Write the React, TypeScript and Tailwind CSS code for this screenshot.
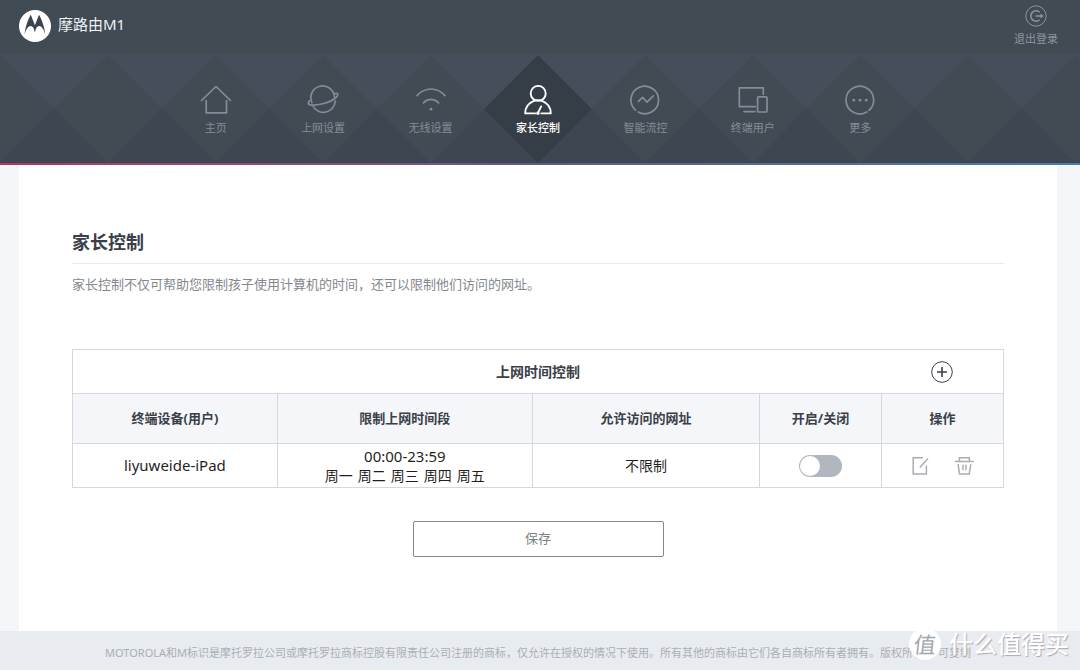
import { useState, type ReactNode } from 'react';

interface NavItem {
  label: string;
  icon: ReactNode;
}

const navItems: NavItem[] = [
  {
    label: '主页',
    icon: <path d="M1.5 16.5L16 2.5l14.5 14M6.200 16.500v12.300h20.300V16.500" />,
  },
  {
    label: '上网设置',
    icon: (
      <>
        <path d="M4.9 18.6A11.8 11.8 0 1 1 27.4 13" />
        <path d="M6.3 22.6A11.8 11.8 0 0 0 28.2 17.2" />
        <path d="M2.6 16.6C.2 19.5 1.6 21.2 5 21.2c6 0 17.5-2.2 23.4-7.2 3.2-2.8 3.4-5.4-.4-4.4" />
      </>
    ),
  },
  {
    label: '无线设置',
    icon: (
      <>
        <path d="M2 11.6C10 2.8 22 2.8 30 11.6M8.4 18.8c4.6-4.6 10.6-4.6 15.2 0" />
        <circle cx="16" cy="25.2" r="1.400" fill="currentColor" stroke="none" />
      </>
    ),
  },
  {
    label: '家长控制',
    icon: (
      <>
        <circle cx="16.200" cy="9.4" r="7.500" />
        <path d="M13.2 29.4H3.2C3.2 23.6 6.6 19.2 11.4 17.2a11 11 0 0 1 9.2 0c4.8 2 8.200 6.400 8.200 12.200H19.4M19.200 22.400l-3 6" />
        <circle cx="15.9" cy="29.2" r="1.700" fill="currentColor" stroke="none" />
      </>
    ),
  },
  {
    label: '智能流控',
    icon: (
      <>
        <path d="M6.400 26.100A13.800 13.800 0 1 1 9.200 28.100" />
        <path d="M9.400 17.400l4.200-4 4.400 4.800 6.400-6.400" />
      </>
    ),
  },
  {
    label: '终端用户',
    icon: (
      <>
        <path d="M18.400 22.600H2.300V3.800h24v6.400M7 27.600h11" />
        <rect x="20.600" y="12.800" width="9.400" height="15.200" rx="1" />
      </>
    ),
  },
  {
    label: '更多',
    icon: (
      <>
        <path d="M25 26.400A13.800 13.800 0 1 0 22.800 28" />
        <g fill="currentColor" stroke="none">
          <circle cx="9.800" cy="16.200" r="1.400" />
          <circle cx="16" cy="16.200" r="1.400" />
          <circle cx="22.200" cy="16.200" r="1.400" />
        </g>
      </>
    ),
  },
];

const columns = [
  { title: '终端设备(用户)', width: 'w-[22%]' },
  { title: '限制上网时间段', width: 'w-[27.4%]' },
  { title: '允许访问的网址', width: 'w-[24.4%]' },
  { title: '开启/关闭', width: 'w-[13.1%]' },
  { title: '操作', width: 'w-[13.1%]' },
];

const rules = [
  {
    device: 'liyuweide-iPad',
    time: '00:00-23:59',
    days: ['周一', '周二', '周三', '周四', '周五'],
    sites: '不限制',
  },
];

export default function App() {
  const [active, setActive] = useState('家长控制');

  return (
    <div className="relative flex min-h-screen flex-col overflow-hidden bg-[#f5f6fa] font-['Noto_Sans','Noto_Sans_CJK_SC',sans-serif]">
      <Header />
      <NavBar active={active} onSelect={setActive} />
      <main className="flex flex-1 flex-col pr-[23px] pl-[19px]">
        <ParentalControl />
      </main>
      <footer className="bg-[#e8ebf0] pt-[14px] pr-1 pb-[9px] text-center text-[11px] leading-4 whitespace-nowrap text-[#aaafb5]">
        MOTOROLA和M标识是摩托罗拉公司或摩托罗拉商标控股有限责任公司注册的商标，仅允许在授权的情况下使用。所有其他的商标由它们各自商标所有者拥有。版权所有 不可复制
      </footer>
      <Watermark />
    </div>
  );
}

function Header() {
  return (
    <header className="flex h-[54px] items-start justify-between bg-[#414b54] pr-[22px] pl-[19px]">
      <div className="flex items-start gap-[7px] pt-[10px]">
        <svg className="size-8" viewBox="0 0 32 32">
          <circle cx="16" cy="16" r="16" fill="#fff" />
          <path
            fill="#3b444d"
            d="M11.800 4.800C9.200 9 6.400 16.500 5.600 24.400c1.600-5.400 3.600-8.400 6.100-8.400 2.100 0 3.300 2.200 4.200 6.400.9-4.200 2.100-6.400 4.200-6.400 2.500 0 4.500 3 6.100 8.400C25.400 16.500 22.600 9 20 4.800L15.900 15.200Z"
          />
        </svg>
        <span className="text-[15px] leading-7 text-[#eef1f3]">摩路由M1</span>
      </div>
      <button className="flex flex-col items-center gap-1 pt-[5px] text-[#8d969f]">
        <svg
          className="size-[22px]"
          viewBox="0 0 22 22"
          fill="none"
          stroke="currentColor"
        >
          <circle cx="11" cy="11" r="10.200" />
          <path strokeWidth="1.500" d="M14.600 7.200A5.200 5.200 0 1 0 14.600 14.800" />
          <path strokeWidth="1.300" d="M10.500 11h7M15.600 9.200l2 1.800-2 1.800" />
        </svg>
        <span className="text-[11px] leading-4">退出登录</span>
      </button>
    </header>
  );
}

interface NavBarProps {
  active: string;
  onSelect: (label: string) => void;
}

function NavBar({ active, onSelect }: NavBarProps) {
  const activeIndex = navItems.findIndex((item) => item.label === active);

  return (
    <div>
      <nav className="relative h-[109px] bg-[#414b54] pr-1">
        <DiamondPattern activeSlot={activeIndex - 3} />
        <div className="relative mx-auto grid h-full max-w-[752px] grid-cols-7">
          {navItems.map((item) => (
            <button
              key={item.label}
              onClick={() => onSelect(item.label)}
              className={`flex flex-col items-center gap-1 pt-[30px] ${
                item.label === active
                  ? 'font-medium text-white'
                  : 'text-[#848d97]'
              }`}
            >
              <svg
                className="size-8"
                viewBox="0 0 32 32"
                fill="none"
                stroke="currentColor"
                strokeWidth={item.label === active ? 1.9 : 1.7}
                strokeLinecap="round"
                strokeLinejoin="round"
              >
                {item.icon}
              </svg>
              <span className="text-[11px] leading-4">{item.label}</span>
            </button>
          ))}
        </div>
      </nav>
      <div className="h-[2px] bg-linear-to-r from-[#b0385f] via-[#62588c] to-[#4480aa]" />
    </div>
  );
}

// Diamonds sit one per nav slot, slot 0 being the middle one
function DiamondPattern({ activeSlot }: { activeSlot: number }) {
  const slots = Array.from({ length: 25 }, (_, i) => i - 12);
  const width = 107.5;

  return (
    <svg
      className="absolute inset-0 h-full w-full"
      viewBox="-538 -1 1080 109"
      preserveAspectRatio="xMidYMid slice"
    >
      <rect x="-1400" y="-1" width="2800" height="55" fill="#454f5b" />
      <rect x="-1400" y="54" width="2800" height="54" fill="#3d4651" />
      {slots.map((slot) => {
        const cx = slot * width;
        return (
          <polygon
            key={slot}
            points={`${cx - width / 2},54 ${cx},0 ${cx + width / 2},54 ${cx},108`}
            fill={slot === activeSlot ? '#353d47' : '#414b54'}
          />
        );
      })}
    </svg>
  );
}

function ParentalControl() {
  return (
    <section className="flex-1 bg-white px-[53px] pt-[63px] pb-[74px]">
      <h1 className="border-b border-[#e9eaec] pb-[7px] text-[18px] leading-7 font-bold text-[#3a4047]">
        家长控制
      </h1>
      <p className="mt-[10px] text-[13px] leading-5 text-[#83888e]">
        家长控制不仅可帮助您限制孩子使用计算机的时间，还可以限制他们访问的网址。
      </p>

      <table className="mt-[55px] w-full table-fixed border-collapse text-center [&_td]:border [&_td]:border-[#d5d8dc] [&_th]:border [&_th]:border-[#d5d8dc]">
        <colgroup>
          {columns.map((col) => (
            <col key={col.title} className={col.width} />
          ))}
        </colgroup>
        <thead>
          <tr className="h-11">
            <th colSpan={5} className="p-0">
              <div className="flex items-center">
                <span className="w-[13.1%]" />
                <span className="flex-1 text-[14px] leading-5 font-bold text-[#3a4047]">
                  上网时间控制
                </span>
                <span className="flex w-[13.1%] justify-center">
                  <button aria-label="添加" className="text-[#3a4047]">
                    <svg
                      className="size-[22px]"
                      viewBox="0 0 22 22"
                      fill="none"
                      stroke="currentColor"
                    >
                      <circle cx="11" cy="11" r="10.300" />
                      <path strokeWidth="1.600" d="M11 6v10M6 11h10" />
                    </svg>
                  </button>
                </span>
              </div>
            </th>
          </tr>
          <tr className="h-[50px] bg-[#f4f6fa]">
            {columns.map((col) => (
              <th
                key={col.title}
                className="p-0 pb-[2px] text-[13px] leading-5 font-bold text-[#3a4047]"
              >
                {col.title}
              </th>
            ))}
          </tr>
        </thead>
        <tbody className="text-[15px] leading-[19px] text-[#1f1f1f]">
          {rules.map((rule) => (
            <tr key={rule.device} className="h-11">
              <td className="p-0">{rule.device}</td>
              <td className="p-0">
                <div>{rule.time}</div>
                <div className="flex justify-center gap-[5px] text-[14px]">
                  {rule.days.map((day) => (
                    <span key={day}>{day}</span>
                  ))}
                </div>
              </td>
              <td className="p-0 text-[14px]">{rule.sites}</td>
              <td className="p-0">
                <Toggle label={`开启/关闭 ${rule.device}`} />
              </td>
              <td className="p-0">
                <RowActions />
              </td>
            </tr>
          ))}
        </tbody>
      </table>

      <div className="mt-[33px] flex justify-center">
        <button className="h-9 w-[251px] rounded-[2px] border border-[#85888c] text-[13px] text-[#7b7f84]">
          保存
        </button>
      </div>
    </section>
  );
}

function Toggle({ label }: { label: string }) {
  const [on, setOn] = useState(false);

  return (
    <input
      type="checkbox"
      role="switch"
      aria-label={label}
      checked={on}
      onChange={(e) => setOn(e.target.checked)}
      className="mx-auto flex h-[22px] w-[43px] cursor-pointer appearance-none rounded-full bg-[#b1b7bf] p-px before:size-5 before:rounded-full before:bg-white checked:justify-end checked:bg-[#4a86b0]"
    />
  );
}

function RowActions() {
  return (
    <div className="flex justify-center gap-6 text-[#a9adb2]">
      <button aria-label="编辑">
        <svg
          className="size-5"
          viewBox="0 0 20 20"
          fill="none"
          stroke="currentColor"
          strokeWidth="1.500"
        >
          <path d="M12 1.700H2.200v16.200h13.200V9.400M17 2.600l-8.200 8.800" />
        </svg>
      </button>
      <button aria-label="删除">
        <svg
          className="size-5"
          viewBox="0 0 20 20"
          fill="none"
          stroke="currentColor"
          strokeWidth="1.500"
        >
          <path d="M0 5.400h18.800M4.400 5.400V1.700h10v3.700M3 8.200l1.600 9.700h9.600l1.600-9.700M8 8.800v5.400M11 8.800v5.400" />
        </svg>
      </button>
    </div>
  );
}

function Watermark() {
  return (
    <div className="pointer-events-none absolute right-[11px] bottom-[10px] flex items-center gap-2">
      <span className="flex size-8 items-center justify-center rounded-full bg-white text-[22px] leading-none text-[#a3a7ad]">
        <span className="-skew-x-6">值</span>
      </span>
      <span className="text-[24px] leading-8 font-medium text-white [text-shadow:1px_1px_1px_#a8acb2]">
        什么值得买
      </span>
    </div>
  );
}
